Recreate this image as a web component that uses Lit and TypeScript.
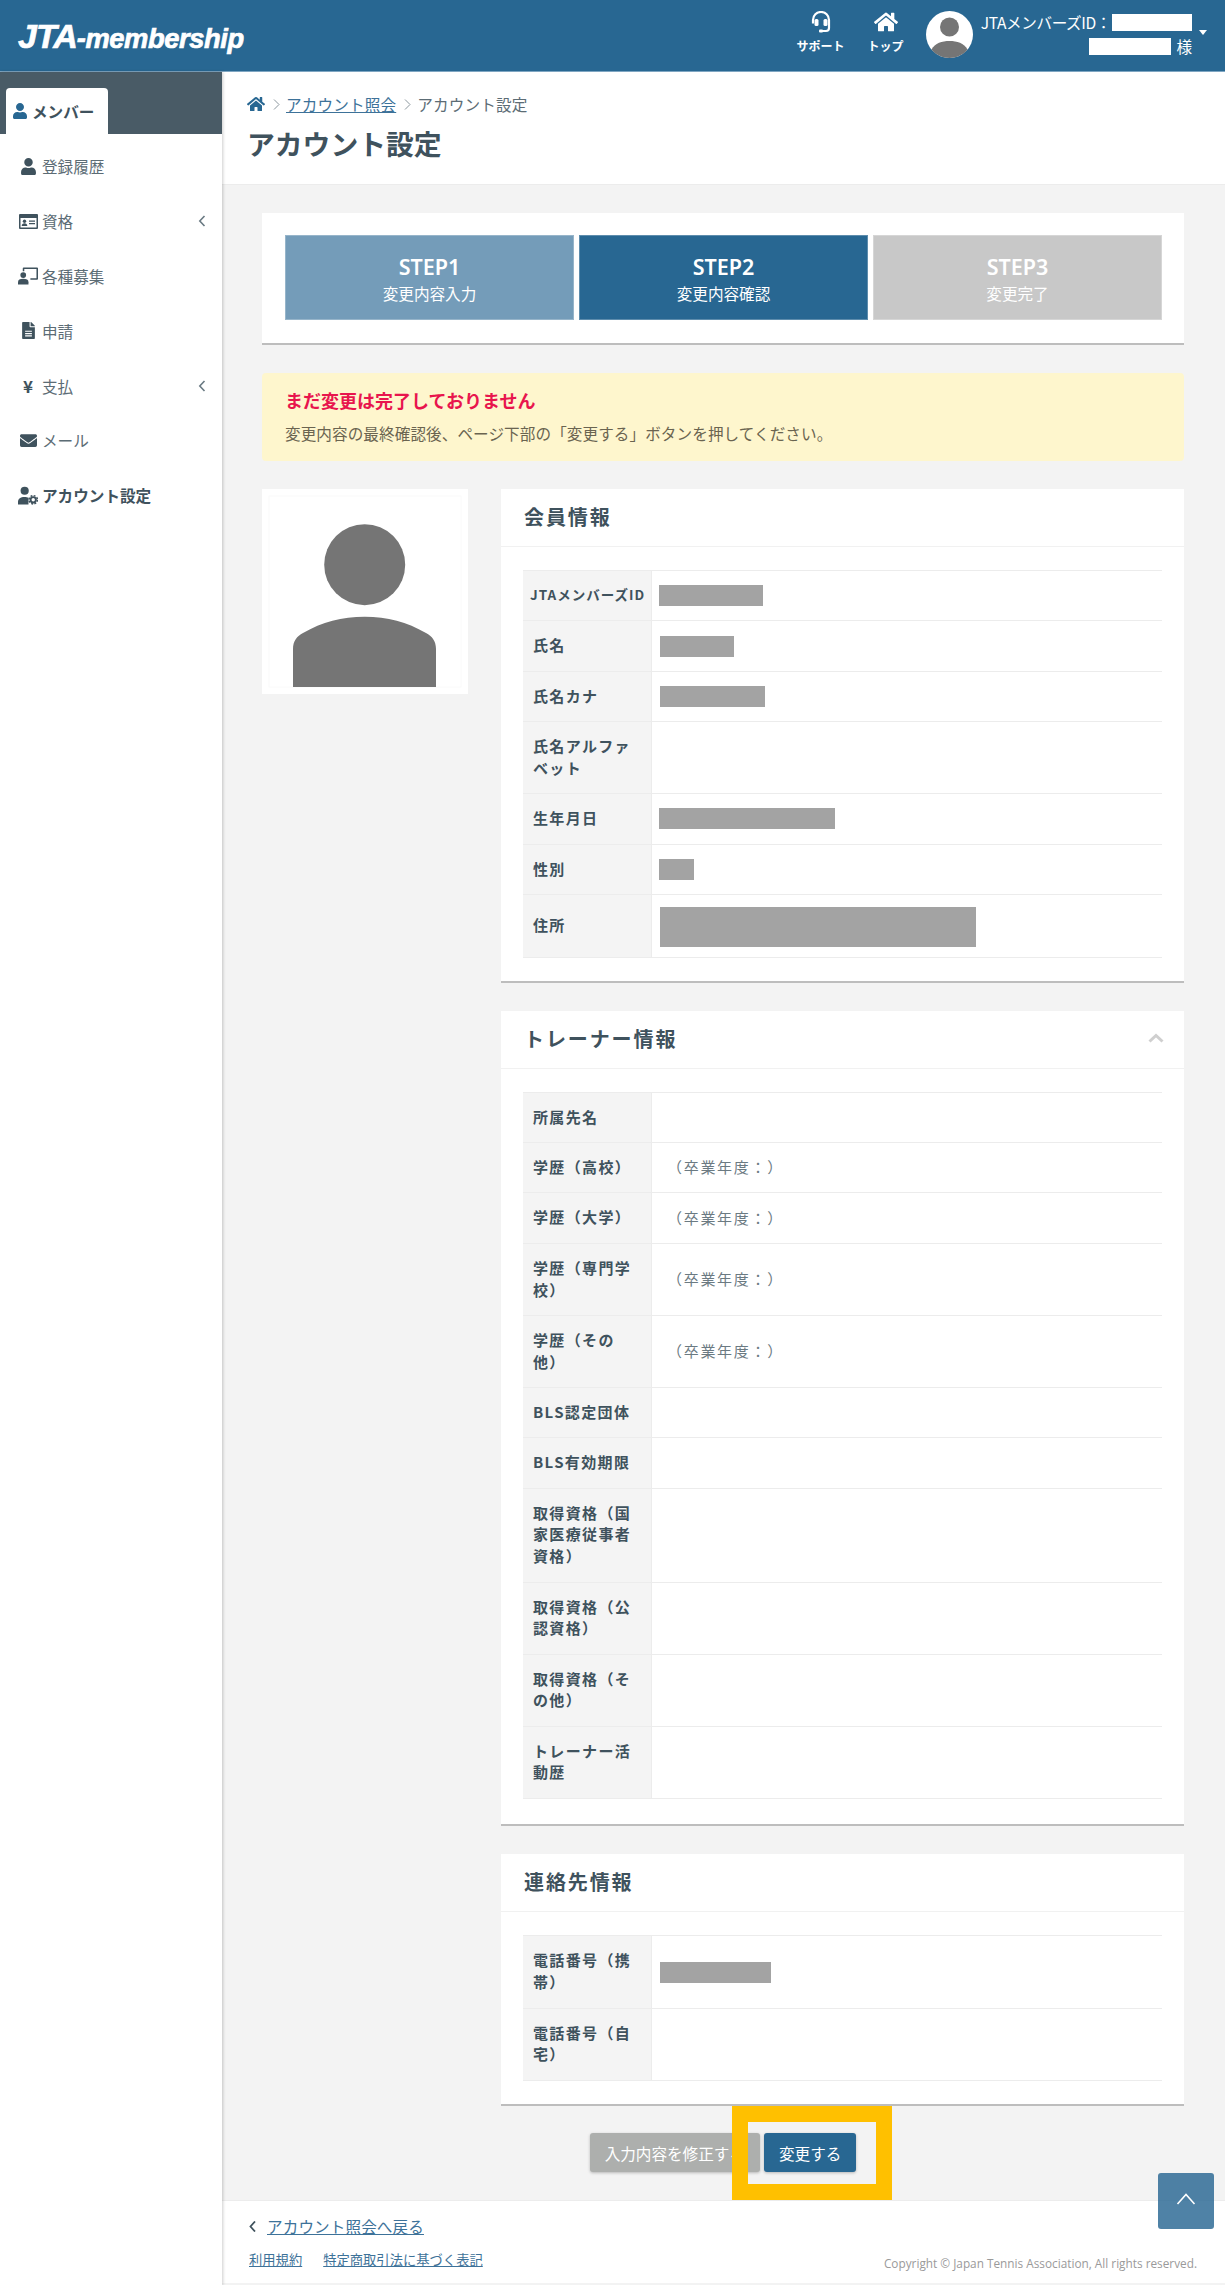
import { LitElement, html, css, svg } from "lit";
import { customElement } from "lit/decorators.js";

const USER = svg`<path d="M224 256c70.7 0 128-57.3 128-128S294.7 0 224 0 96 57.3 96 128s57.3 128 128 128zm89.6 32h-16.7c-22.2 10.2-46.9 16-72.9 16s-50.6-5.8-72.9-16h-16.7C60.2 288 0 348.2 0 422.4V464c0 26.5 21.5 48 48 48h352c26.5 0 48-21.5 48-48v-41.6c0-74.2-60.2-134.4-134.4-134.4z"/>`;
const HOME = svg`<path d="M280.37 148.26L96 300.11V464a16 16 0 0 0 16 16l112.06-.29a16 16 0 0 0 15.92-16V368a16 16 0 0 1 16-16h64a16 16 0 0 1 16 16v95.64a16 16 0 0 0 16 16.05L464 480a16 16 0 0 0 16-16V300L295.67 148.26a12.19 12.19 0 0 0-15.3 0zM571.6 251.47L488 182.56V44.05a12 12 0 0 0-12-12h-56a12 12 0 0 0-12 12v72.61L318.47 43a48 48 0 0 0-61 0L4.34 251.47a12 12 0 0 0-1.6 16.9l25.5 31A12 12 0 0 0 45.15 301l235.22-193.74a12.19 12.19 0 0 1 15.3 0L530.9 301a12 12 0 0 0 16.9-1.6l25.5-31a12 12 0 0 0-1.7-16.93z"/>`;
const MAIL = svg`<path d="M502.3 190.8c3.9-3.1 9.7-.2 9.7 4.7V400c0 26.5-21.5 48-48 48H48c-26.5 0-48-21.5-48-48V195.6c0-5 5.7-7.8 9.7-4.7 22.4 17.4 52.1 39.5 154.1 113.6 21.1 15.4 56.7 47.8 92.2 47.6 35.7.3 72-32.8 92.3-47.6 102-74.1 131.6-96.3 154-113.7zM256 320c23.2.4 56.6-29.2 73.4-41.4 132.7-96.3 142.8-104.7 173.4-128.7 5.8-4.5 9.2-11.5 9.2-18.9v-19c0-26.5-21.5-48-48-48H48C21.5 64 0 85.5 0 112v19c0 7.4 3.4 14.3 9.2 18.9 30.6 23.9 40.7 32.4 173.4 128.7 16.8 12.2 50.2 41.8 73.4 41.4z"/>`;
const FILE = svg`<path d="M224 136V0H24C10.7 0 0 10.7 0 24v464c0 13.3 10.7 24 24 24h336c13.3 0 24-10.7 24-24V160H248c-13.2 0-24-10.8-24-24zm160-14.1v6.1H256V0h6.1c6.4 0 12.5 2.5 17 7l97.9 98c4.5 4.5 7 10.6 7 16.9z"/><path d="M90 260h204v36H90zM90 330h204v36H90zM90 400h204v36H90z" fill="#fff"/>`;

type Row = { label: string; tight?: boolean; value?: string; bar?: [number, number]; tall?: boolean };

const memberRows: Row[] = [
  { label: "JTAメンバーズID", tight: true, bar: [0, 104] },
  { label: "氏名", bar: [1, 74] },
  { label: "氏名カナ", bar: [1, 105] },
  { label: "氏名アルファベット" },
  { label: "生年月日", bar: [0, 176] },
  { label: "性別", bar: [0, 35] },
  { label: "住所", bar: [1, 316], tall: true },
];
const year = "（卒業年度：）";
const trainerRows: Row[] = [
  { label: "所属先名" },
  { label: "学歴（高校）", value: year },
  { label: "学歴（大学）", value: year },
  { label: "学歴（専門学校）", value: year },
  { label: "学歴（その他）", value: year },
  { label: "BLS認定団体" },
  { label: "BLS有効期限" },
  { label: "取得資格（国家医療従事者資格）" },
  { label: "取得資格（公認資格）" },
  { label: "取得資格（その他）" },
  { label: "トレーナー活動歴" },
];
const contactRows: Row[] = [
  { label: "電話番号（携帯）", bar: [1, 111] },
  { label: "電話番号（自宅）" },
];

@customElement("app-root")
export class AppRoot extends LitElement {
  static styles = css`
    :host {
      display: block;
      position: relative;
      background: #f3f3f3;
      font-family: "Noto Sans CJK JP", "Noto Sans", sans-serif;
      font-size: 15.6px;
      color: #5c6c75;
      width: 1225px;
      height: 2285px;
      overflow: hidden;
      text-spacing-trim: space-all;
      text-autospace: no-autospace;
    }
    * { box-sizing: border-box; }
    a { color: #3d7299; text-decoration: underline; }

    .top {
      height: 72px;
      background: #286792;
      border-bottom: 1px solid #7fa6c2;
      display: flex;
      justify-content: space-between;
      padding-right: 18px;
    }
    .logo {
      margin: 18px 0 0 18px;
      color: #fff;
      font-family: "Liberation Sans", sans-serif;
      font-weight: 700;
      font-style: italic;
      font-size: 27.3px;
      line-height: 36px;
      letter-spacing: -0.4px;
      -webkit-text-stroke: 0.7px #fff;
      white-space: nowrap;
    }
    .logo b { font-size: 34px; letter-spacing: -1px; }
    .tools { display: flex; align-items: flex-start; }
    .tool {
      width: 65px;
      display: flex;
      flex-direction: column;
      align-items: center;
      color: #fff;
      font-size: 12px;
      font-weight: 700;
      line-height: 16px;
      padding-top: 11px;
    }
    .tool svg { display: block; height: 22px; margin-bottom: 5px; fill: #fff; }
    .avatar { margin: 11px 5px 0 8px; width: 47px; height: 47px; display: block; }
    .who { width: 214px; color: #fff; padding-top: 10px; line-height: 24px; white-space: nowrap; }
    .who div { display: flex; justify-content: flex-end; align-items: center; }
    .lbl { letter-spacing: -0.4px; margin-right: 1px; }
    .mask { background: #fff; height: 17px; display: block; flex: none; }
    .m1 { width: 80px; }
    .m2 { width: 82px; margin-right: 5px; }
    .caret {
      margin: 30px 0 0 7px;
      width: 0;
      height: 0;
      border: 4px solid transparent;
      border-top: 5px solid #fff;
      border-bottom: 0;
    }

    .layout { display: grid; grid-template-columns: 222px 1fr; height: 2213px; }
    .side {
      background: #fff;
      box-shadow: 1px 0 3px rgba(0, 0, 0, 0.2);
      position: relative;
      z-index: 1;
    }
    .tabs { background: #495b66; height: 62px; padding: 16px 0 0 6px; }
    .tab {
      width: 102px;
      height: 46px;
      background: #fff;
      border-radius: 4px 4px 0 0;
      display: flex;
      align-items: center;
      padding-left: 7px;
      gap: 5px;
      color: #3f525d;
      font-weight: 700;
    }
    .tab svg { width: 14px; height: 16px; fill: #286792; }
    .nav { padding-top: 5px; }
    .item {
      height: 54.8px;
      display: flex;
      align-items: center;
      padding: 0 16px 0 18px;
      color: #5c6c75;
    }
    .item.on { color: #3f525d; font-weight: 700; }
    .ico { width: 20px; margin-right: 4px; display: flex; justify-content: center; align-items: center; }
    .ico svg { display: block; fill: #3f525d; }
    .yen { font-weight: 700; color: #3f525d; font-size: 17px; line-height: 20px; }
    .chev { margin-left: auto; width: 8px; height: 12px; fill: none; stroke: #6a7a83; stroke-width: 1.6; }

    .content { display: flex; flex-direction: column; min-width: 0; padding-bottom: 2px; }
    .head {
      background: #fff;
      border-bottom: 1px solid #ececec;
      height: 113px;
      padding: 21px 0 0 25px;
    }
    .crumb { display: flex; align-items: center; line-height: 22px; height: 22px; letter-spacing: 0.15px; }
    .crumb svg.h { width: 18px; height: 16px; fill: #286792; }
    .crumb svg.s { width: 7px; height: 11px; margin: 0 6px 0 8px; fill: none; stroke: #8a969d; stroke-width: 1; }
    h1 { margin: 8px 0 0; font-size: 27.8px; line-height: 40px; font-weight: 700; color: #3f525d; }

    .main { flex: 1; padding: 28px 41px 0 40px; }
    .steps {
      background: #fff;
      height: 132px;
      padding: 22px 22px 0 23px;
      border-bottom: 2px solid #bdbdbd;
      display: flex;
      gap: 5px;
    }
    .step {
      flex: 1;
      height: 85px;
      color: #fff;
      text-align: center;
      display: flex;
      flex-direction: column;
      align-items: center;
      padding-top: 17px;
      border: 1px solid rgba(255, 255, 255, 0.25);
    }
    .step b { font-family: "Noto Sans", sans-serif; font-weight: 600; font-size: 21.5px; line-height: 28px; }
    .step span { line-height: 24px; margin-top: 0; }
    .s1 { background: #749cb9; }
    .s2 { background: #286792; }
    .s3 { background: #c8c8c8; }

    .alert {
      margin-top: 28px;
      height: 88px;
      background: #fef6cd;
      border-radius: 4px;
      padding: 14px 23px 0;
      color: #6a6450;
    }
    .alert b { display: block; color: #e8154d; font-size: 18px; line-height: 26px; }
    .alert span { display: block; margin-top: 8px; line-height: 24px; letter-spacing: 0.08px; }

    .cols { display: flex; gap: 33px; margin-top: 28px; align-items: flex-start; }
    .photo { width: 206px; height: 205px; background: #fff; flex: none; }
    .photo svg { display: block; }
    .panels { flex: 1; min-width: 0; }
    .panel { background: #fff; border-bottom: 2px solid #bdbdbd; margin-bottom: 28.6px; }
    .panel:first-child { margin-bottom: 27.6px; }
    .panel:last-child { margin-bottom: 27px; }
    .panel:nth-child(2) .pbody { padding-bottom: 25px; }
    .phead {
      height: 58px;
      border-bottom: 1px solid #f1f1f1;
      display: flex;
      align-items: center;
      justify-content: space-between;
      padding: 0 20px 2px 23px;
      font-size: 20px;
      letter-spacing: 1.9px;
      font-weight: 700;
      color: #3f525d;
    }
    .phead svg { width: 16px; height: 10px; fill: none; stroke: #cfcfcf; stroke-width: 3; }
    .pbody { padding: 23px 22px 23px; }
    table { width: 100%; table-layout: fixed; border-collapse: collapse; border-top: 1px solid #ececec; }
    tr { border-bottom: 1px solid #ececec; }
    th {
      width: 128.5px;
      background: #f4f4f4;
      border-right: 1px solid #ececec;
      padding: 13px 10px 14.7px;
      text-align: left;
      font-size: 15px;
      letter-spacing: 1.35px;
      line-height: 21.7px;
      color: #3f525d;
      font-weight: 700;
    }
    th.tight { padding: 13px 0 14.7px 7px; font-size: 13.5px; letter-spacing: 1px; white-space: nowrap; }
    td {
      padding: 0 7px 2px;
      font-size: 15px;
      letter-spacing: 1.7px;
      color: #6b7a82;
      vertical-align: middle;
    }
    td.tall { padding: 12px 7px 10px; }
    .val { margin-left: 8px; }
    .bar { background: #a3a3a3; height: 21px; display: block; position: relative; top: 1px; }
    .tall .bar { height: 40px; top: 0; }

    .btns {
      display: flex;
      justify-content: center;
      gap: 4px;
      padding: 0.4px 0 28px;
    }
    .btn {
      height: 39px;
      padding: 0 15px;
      display: flex;
      align-items: center;
      border-radius: 3px;
      color: #fff;
      box-shadow: 0 1px 3px rgba(0, 0, 0, 0.25);
      white-space: nowrap;
    }
    .gray { background: #adafad; }
    .blue { background: #286792; position: relative; }
    .mark {
      position: absolute;
      left: -32px;
      top: -27px;
      width: 160px;
      height: 94px;
      border: 16px solid #ffc000;
    }

    .foot {
      background: #fff;
      border-top: 1px solid #ececec;
      height: 83px;
      padding: 13px 28px 0 27px;
    }
    .back { display: flex; align-items: center; line-height: 24px; gap: 11px; letter-spacing: 0.1px; }
    .back svg { width: 7px; height: 11px; fill: none; stroke: #3f525d; stroke-width: 1.8; }
    .foot-row { display: flex; align-items: flex-end; margin-top: 12px; gap: 21px; font-size: 13.3px; line-height: 20px; }
    .copy {
      margin-left: auto;
      font-family: "Open Sans", sans-serif;
      font-size: 11.8px;
      color: #9a9a9a;
      transform: translateY(3px);
    }
    .totop {
      position: absolute;
      left: 1158px;
      top: 2173px;
      width: 56px;
      height: 56px;
      border-radius: 3px;
      background: rgba(40, 103, 146, 0.82);
      display: flex;
      align-items: center;
      justify-content: center;
    }
    .totop svg { width: 20px; height: 12px; fill: none; stroke: #fff; stroke-width: 1.6; margin-bottom: 4px; }
  `;

  private rows(rows: Row[]) {
    return html`<table><tbody>${rows.map(
      (r) => html`<tr>
        <th class=${r.tight ? "tight" : ""}>${r.label}</th>
        <td class=${r.tall ? "tall" : ""}>${r.bar
          ? html`<span class="bar" style="margin-left:${r.bar[0]}px;width:${r.bar[1]}px"></span>`
          : r.value ? html`<span class="val">${r.value}</span>` : ""}</td>
      </tr>`
    )}</tbody></table>`;
  }

  private navItem(icon: unknown, label: string, chev = false, on = false) {
    return html`<div class="item ${on ? "on" : ""}">
      <span class="ico">${icon}</span>${label}
      ${chev ? html`<svg class="chev" viewBox="0 0 8 12"><path d="M6.5 1 1.8 6l4.7 5"/></svg>` : ""}
    </div>`;
  }

  render() {
    const person = html`<svg width="15" height="17" viewBox="0 0 448 512">${USER}</svg>`;
    const card = html`<svg width="19" height="15" viewBox="0 0 19 15">
      <path fill-rule="evenodd" d="M1 0h17a1 1 0 0 1 1 1v13a1 1 0 0 1-1 1H1a1 1 0 0 1-1-1V1a1 1 0 0 1 1-1zM1.500 4v9.500h16V4z"/>
      <circle cx="5.500" cy="7.300" r="1.700"/><path d="M2.700 12c0-1.800 1.200-2.700 2.800-2.700s2.800.9 2.800 2.700z"/>
      <path d="M10 6.500h6v1.300h-6zM10 9h6v1.300h-6z"/></svg>`;
    const recruit = html`<svg width="21" height="19" viewBox="0 0 21 19">
      <path d="M6 1h14a1 1 0 0 1 1 1v11a1 1 0 0 1-1 1h-7v-1.600h6.400V2.600H6.600V5H5V2a1 1 0 0 1 1-1z"/>
      <circle cx="5.500" cy="9" r="3"/><path d="M0 19v-2.500C0 14 2 13 5.500 13s5.500 1 5.500 3.500V19z"/></svg>`;
    const cog = html`<svg width="21" height="19" viewBox="0 0 21 19">
      <circle cx="7" cy="4.500" r="4.300"/><path d="M0 19v-3c0-3 2.500-5 7-5 1.500 0 3 .2 4 .8V19z"/>
      <circle cx="16" cy="14" r="2.800" fill="none" stroke="#3f525d" stroke-width="2"/>
      <circle cx="16" cy="14" r="4.400" fill="none" stroke="#3f525d" stroke-width="1.500" stroke-dasharray="2 1.450"/></svg>`;

    return html`
      <header class="top">
        <div class="logo"><b>JTA</b>-membership</div>
        <div class="tools">
          <div class="tool">
            <svg width="24" height="24" viewBox="0 0 22 22">
              <path d="M3 12.500V9a8 8 0 0 1 16 0v8a3 3 0 0 1-3 3H11" fill="none" stroke="#fff" stroke-width="2.200"/>
              <rect x="4.500" y="8" width="4" height="7" rx="1.500"/><rect x="13.500" y="8" width="4" height="7" rx="1.500"/>
              <rect x="9" y="18.500" width="4" height="3" rx="1"/>
            </svg>
            サポート
          </div>
          <div class="tool">
            <svg width="24" height="22" viewBox="0 0 576 512">${HOME}</svg>
            トップ
          </div>
          <svg class="avatar" viewBox="0 0 47 47">
            <ellipse cx="23.500" cy="23.500" rx="23.500" ry="23.500" fill="#fff"/>
            <circle cx="23.500" cy="16" r="9.500" fill="#757575"/>
            <path d="M5.500 38.500C9 32 16 30 23.500 30s14.500 2 18 8.500C37 44 30.500 47 23.500 47S10 44 5.500 38.500z" fill="#757575"/>
          </svg>
          <div class="who">
            <div><span class="lbl">JTAメンバーズID：</span><span class="mask m1"></span></div>
            <div><span class="mask m2"></span>様</div>
          </div>
          <div class="caret"></div>
        </div>
      </header>
      <div class="layout">
        <aside class="side">
          <div class="tabs">
            <div class="tab"><svg viewBox="0 0 448 512">${USER}</svg>メンバー</div>
          </div>
          <nav class="nav">
            ${this.navItem(person, "登録履歴")}
            ${this.navItem(card, "資格", true)}
            ${this.navItem(recruit, "各種募集")}
            ${this.navItem(html`<svg width="13" height="17" viewBox="0 0 384 512">${FILE}</svg>`, "申請")}
            ${this.navItem(html`<span class="yen">¥</span>`, "支払", true)}
            ${this.navItem(html`<svg width="17" height="17" viewBox="0 0 512 512">${MAIL}</svg>`, "メール")}
            ${this.navItem(cog, "アカウント設定", false, true)}
          </nav>
        </aside>
        <div class="content">
          <section class="head">
            <div class="crumb">
              <svg class="h" viewBox="0 0 576 512">${HOME}</svg>
              <svg class="s" viewBox="0 0 7 11"><path d="M1 .5 6 5.500l-5 5"/></svg>
              <a href="#">アカウント照会</a>
              <svg class="s" viewBox="0 0 7 11"><path d="M1 .5 6 5.500l-5 5"/></svg>
              <span>アカウント設定</span>
            </div>
            <h1>アカウント設定</h1>
          </section>
          <main class="main">
            <section class="steps">
              <div class="step s1"><b>STEP1</b><span>変更内容入力</span></div>
              <div class="step s2"><b>STEP2</b><span>変更内容確認</span></div>
              <div class="step s3"><b>STEP3</b><span>変更完了</span></div>
            </section>
            <section class="alert">
              <b>まだ変更は完了しておりません</b>
              <span>変更内容の最終確認後、ページ下部の「変更する」ボタンを押してください。</span>
            </section>
            <div class="cols">
              <div class="photo">
                <svg width="206" height="205" viewBox="0 0 206 205">
                  <rect x="7" y="7" width="192" height="191" fill="none" stroke="#fafafa"/>
                  <circle cx="102.700" cy="75.700" r="40.500" fill="#757575"/>
                  <path d="M31 198V160C31 152 35 147 41 144 60 133 80 127.700 102.700 127.700S145 133 164 144C170 147 174 152 174 160V198Z" fill="#757575"/>
                </svg>
              </div>
              <div class="panels">
                <section class="panel">
                  <div class="phead">会員情報</div>
                  <div class="pbody">${this.rows(memberRows)}</div>
                </section>
                <section class="panel">
                  <div class="phead">トレーナー情報
                    <svg viewBox="0 0 16 10"><path d="M1.500 8.500 8 2.500l6.500 6"/></svg>
                  </div>
                  <div class="pbody">${this.rows(trainerRows)}</div>
                </section>
                <section class="panel">
                  <div class="phead">連絡先情報</div>
                  <div class="pbody">${this.rows(contactRows)}</div>
                </section>
              </div>
            </div>
            <div class="btns">
              <div class="btn gray">入力内容を修正する</div>
              <div class="btn blue">変更する<span class="mark"></span></div>
            </div>
          </main>
          <footer class="foot">
            <div class="back">
              <svg viewBox="0 0 7 11"><path d="M6 .5 1.500 5.500 6 10.500"/></svg>
              <a href="#">アカウント照会へ戻る</a>
            </div>
            <div class="foot-row">
              <a href="#">利用規約</a>
              <a href="#">特定商取引法に基づく表記</a>
              <span class="copy">Copyright © Japan Tennis Association, All rights reserved.</span>
            </div>
          </footer>
        </div>
      </div>
      <div class="totop"><svg viewBox="0 0 20 12"><path d="M1.500 11 10 1.500l8.500 9.500"/></svg></div>
    `;
  }
}
